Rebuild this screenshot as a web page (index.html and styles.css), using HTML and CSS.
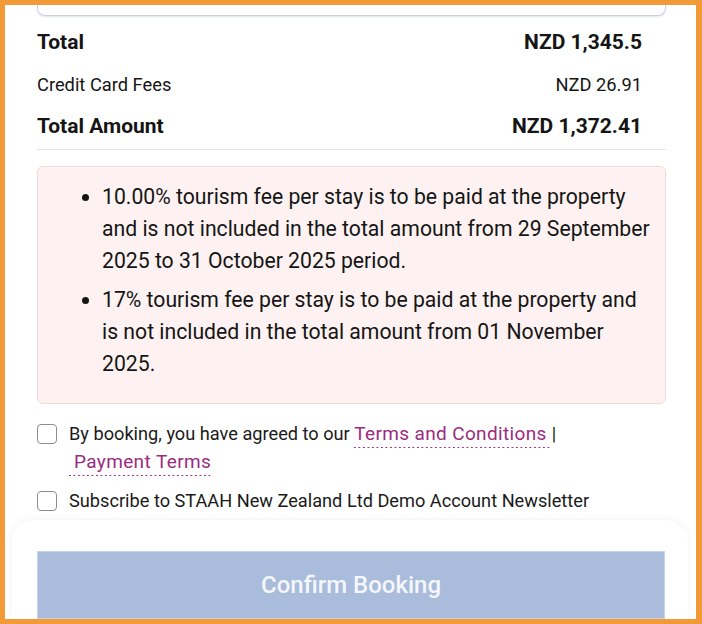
FILE: index.html
```html
<!DOCTYPE html>
<html lang="en">
<head>
<meta charset="utf-8">
<title>Booking summary</title>
<link rel="stylesheet" href="styles.css">
</head>
<body>
<div class="frame">
  <div class="content">
    <div class="input-stub"></div>
    <div class="summary">
      <div class="row row-strong"><span>Total</span><span>NZD 1,345.5</span></div>
      <div class="row row-small"><span>Credit Card Fees</span><span>NZD 26.91</span></div>
      <div class="row row-strong"><span>Total Amount</span><span>NZD 1,372.41</span></div>
    </div>
    <div class="notice">
      <ul class="notice-list">
        <li>10.00% tourism fee per stay is to be paid at the property and is not included in the total amount from 29 September 2025 to 31 October 2025 period.</li>
        <li>17% tourism fee per stay is to be paid at the property and is not included in the total amount from 01 November 2025.</li>
      </ul>
    </div>
    <div class="checks">
      <label class="check">
        <span class="box"></span>
        <span class="check-text">By booking, you have agreed to our <a class="link" href="#">Terms and Conditions&nbsp;</a>| <a class="link" href="#">&nbsp;Payment&nbsp;Terms</a></span>
      </label>
      <label class="check">
        <span class="box"></span>
        <span class="check-text">Subscribe to STAAH New Zealand Ltd Demo Account Newsletter</span>
      </label>
    </div>
  </div>
  <div class="footer">
    <button class="confirm" type="button">Confirm Booking</button>
  </div>
</div>
</body>
</html>
```

FILE: styles.css
```css
html, body {
  margin: 0;
  padding: 0;
  background: #ffffff;
}

.frame {
  box-sizing: border-box;
  width: 702px;
  height: 624px;
  border-style: solid;
  border-color: #f29a37;
  border-width: 5px 6px 5px 5px;
  background: #ffffff;
  overflow: hidden;
  font-family: Roboto, "Liberation Sans", sans-serif;
  color: #151515;
  display: flex;
  flex-direction: column;
}

.content {
  padding: 0 30px 0 32px;
}

.input-stub {
  height: 10px;
  border: 1px solid #c8d0e3;
  border-top: 0;
  border-radius: 0 0 8px 8px;
  box-shadow: 0 1px 2px rgba(140, 155, 190, 0.25);
}

.summary {
  padding: 5px 0 2px;
  border-bottom: 1px solid #e6e6e6;
}

.row {
  display: flex;
  justify-content: space-between;
  height: 42px;
  align-items: center;
  padding-right: 24px;
}

.row-strong {
  font-size: 21px;
  font-weight: 700;
}

.row-small {
  font-size: 18.3px;
}

.notice {
  margin-top: 16px;
  background: #fdf2f1;
  border: 1px solid #f4d9d8;
  border-radius: 6px;
  padding: 14px 12px 23px 24px;
}

.notice-list {
  margin: 0;
  padding-left: 40px;
  font-size: 21.2px;
  line-height: 32px;
}

.notice-list li + li {
  margin-top: 7px;
}

.checks {
  padding-top: 16px;
}

.check {
  display: flex;
  align-items: flex-start;
  gap: 12px;
  font-size: 18.2px;
  line-height: 28px;
  color: #1a1a1a;
}

.check + .check {
  margin-top: 11px;
}

.box {
  flex: none;
  box-sizing: border-box;
  width: 20px;
  height: 20px;
  margin-top: 4px;
  border: 1.5px solid #8c8c8c;
  border-radius: 4px;
  background: #ffffff;
}

.link {
  color: #9b2b80;
  font-size: 19px;
  letter-spacing: 0.35px;
  text-decoration: none;
  padding-bottom: 3px;
  background: linear-gradient(to right, #9b2b80 0 1.5px, transparent 1.5px) left bottom / 4.5px 1.5px repeat-x;
}

.footer {
  margin: 5px 8px 0 7px;
  flex: 1;
  background: #ffffff;
  border-radius: 22px 22px 0 0;
  box-shadow: 0 -1px 10px rgba(0, 0, 0, 0.05);
  padding: 31px 23px 0 25px;
}

.confirm {
  display: block;
  width: 100%;
  height: 68px;
  border: 1px solid #c6d3e8;
  background: #a9bcdb;
  color: #f4f6fa;
  font-family: Roboto, "Liberation Sans", sans-serif;
  font-size: 24px;
  font-weight: 500;
  padding: 0;
}
```
